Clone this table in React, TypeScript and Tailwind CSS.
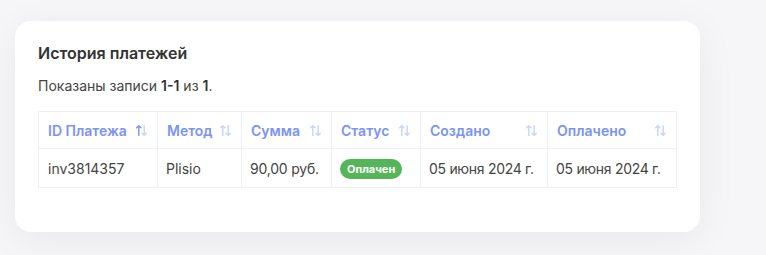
import React from "react";

const SortIcon = ({ active = false }: { active?: boolean }) => (
  <svg width="13" height="13" viewBox="0 0 12 12" fill="none" className="shrink-0">
    <path d="M3.5 10.5V1.5M1.5 3.5L3.5 1.5L5.5 3.5" stroke={active ? "#7b93f5" : "#c9d3fb"} strokeWidth="1.3" strokeLinecap="round" strokeLinejoin="round" />
    <path d="M8.5 1.5V10.5M6.5 8.5L8.5 10.5L10.5 8.5" stroke="#c9d3fb" strokeWidth="1.3" strokeLinecap="round" strokeLinejoin="round" />
  </svg>
);

const cols = [
  { label: "ID Платежа", w: "w-[119px]", active: true },
  { label: "Метод", w: "w-[84px]" },
  { label: "Сумма", w: "w-[90px]" },
  { label: "Статус", w: "w-[89px]" },
  { label: "Создано", w: "w-[127px]" },
  { label: "Оплачено", w: "w-[129px]" },
];

export default function App() {
  return (
    <div className="w-[766px] h-[255px] bg-[#f6f6f8] pt-[21px] pl-[15px] font-['Inter',sans-serif]">
      <div className="w-[685px] h-[211px] bg-white rounded-[16px] shadow-[0_8px_40px_rgba(0,0,0,0.06)] pl-[23px] pt-[22px]">
        <h2 className="text-[16px] font-semibold text-[#333] leading-[20px]">История платежей</h2>
        <p className="mt-[13px] text-[14px] text-[#444] leading-[20px]">
          Показаны записи <b className="font-semibold text-[#333]">1-1</b> из <b className="font-semibold text-[#333]">1</b>.
        </p>
        <table className="mt-[15px] border-collapse table-fixed w-[638px] text-[14px]">
          <thead>
            <tr className="h-[37px]">
              {cols.map((c) => (
                <th key={c.label} className={`${c.w} border border-[#eceff5] px-[9px] text-left align-middle`}>
                  <div className="flex items-center justify-between">
                    <span className="text-[#7b93f5] font-semibold">{c.label}</span>
                    <SortIcon active={c.active} />
                  </div>
                </th>
              ))}
            </tr>
          </thead>
          <tbody>
            <tr className="h-[39px] text-[#444]">
              <td className="border border-[#eceff5] px-[9px]">inv3814357</td>
              <td className="border border-[#eceff5] px-[8px]">Plisio</td>
              <td className="border border-[#eceff5] px-[8px] whitespace-nowrap tracking-[-0.2px]">90,00 руб.</td>
              <td className="border border-[#eceff5] px-[8px]">
                <span className="inline-flex items-center h-[20px] px-[7px] rounded-full bg-[#55b559] text-white text-[11px] font-bold">Оплачен</span>
              </td>
              <td className="border border-[#eceff5] px-[8px] whitespace-nowrap tracking-[-0.3px]">05 июня 2024 г.</td>
              <td className="border border-[#eceff5] px-[8px] whitespace-nowrap tracking-[-0.3px]">05 июня 2024 г.</td>
            </tr>
          </tbody>
        </table>
      </div>
    </div>
  );
}
